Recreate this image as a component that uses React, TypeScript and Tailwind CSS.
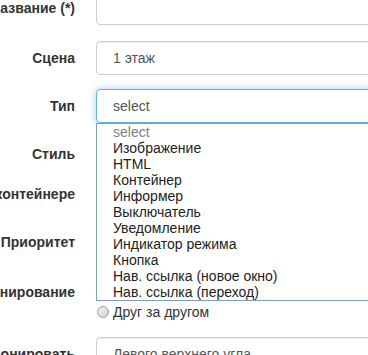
import React from "react";

const options = [
  "select",
  "Изображение",
  "HTML",
  "Контейнер",
  "Информер",
  "Выключатель",
  "Уведомление",
  "Индикатор режима",
  "Кнопка",
  "Нав. ссылка (новое окно)",
  "Нав. ссылка (переход)",
];

const inputCls =
  "h-[34px] w-[300px] rounded border border-[#ccc] bg-white pl-4 text-sm leading-5 text-[#555] shadow-[inset_0_1px_1px_rgba(0,0,0,0.075)] flex items-center";

function Row({
  label,
  height,
  children,
}: {
  label: string;
  height: string;
  children?: React.ReactNode;
}) {
  return (
    <div className={`flex items-start ${height}`}>
      <div className="w-[75px] shrink-0 flex justify-end pt-[7px] text-sm leading-5 font-bold text-[#333] whitespace-nowrap">
        {label}
      </div>
      <div className="ml-[21px] shrink-0">{children}</div>
    </div>
  );
}

export default function App() {
  return (
    <div
      className="relative w-[368px] h-[355px] overflow-hidden bg-white"
      style={{ fontFamily: '"Liberation Sans", Arial, sans-serif' }}
    >
      <div className="-mt-[9px] flex flex-col">
        <Row label="Название (*)" height="h-[50px]">
          <div className={inputCls}></div>
        </Row>
        <Row label="Сцена" height="h-[48px]">
          <div className={inputCls}>1 этаж</div>
        </Row>
        <Row label="Тип" height="h-[48px]">
          <div className="relative z-10">
            <div className="h-[34px] w-[300px] rounded border border-[#66afe9] bg-white pl-4 text-sm leading-5 text-[#555] shadow-[0_0_8px_rgba(102,175,233,0.6)] flex items-center">
              select
            </div>
            <ul className="absolute left-0 top-[34px] w-[290px] border border-[#7f9db9] bg-white py-0">
              {options.map((o, i) => (
                <li
                  key={o}
                  className={`h-4 pl-4 text-sm leading-4 whitespace-nowrap ${
                    i === 0 ? "text-[#808080]" : "text-[#222]"
                  }`}
                >
                  {o}
                </li>
              ))}
            </ul>
          </div>
        </Row>
        <Row label="Стиль" height="h-[40px]">
          <div className={inputCls}></div>
        </Row>
        <Row label="В контейнере" height="h-[48px]">
          <div className={inputCls}></div>
        </Row>
        <Row label="Приоритет" height="h-[50px]">
          <div className={inputCls}></div>
        </Row>
        <Row label="Позиционирование" height="h-[62px]">
          <div className="pt-[7px] flex flex-col text-sm leading-5 text-[#333]">
            {["Абсолютное", "Друг за другом"].map((r) => (
              <label key={r} className="flex items-center h-5">
                <span className="ml-[1px] h-[12px] w-[12px] rounded-full border border-[#a0a0a0] bg-gradient-to-br from-[#f0f0f0] to-[#d4d4d4]"></span>
                <span className="ml-[4px]">{r}</span>
              </label>
            ))}
          </div>
        </Row>
        <Row label="Позиционировать" height="h-[40px]">
          <div className={inputCls}>Левого верхнего угла</div>
        </Row>
      </div>
    </div>
  );
}
